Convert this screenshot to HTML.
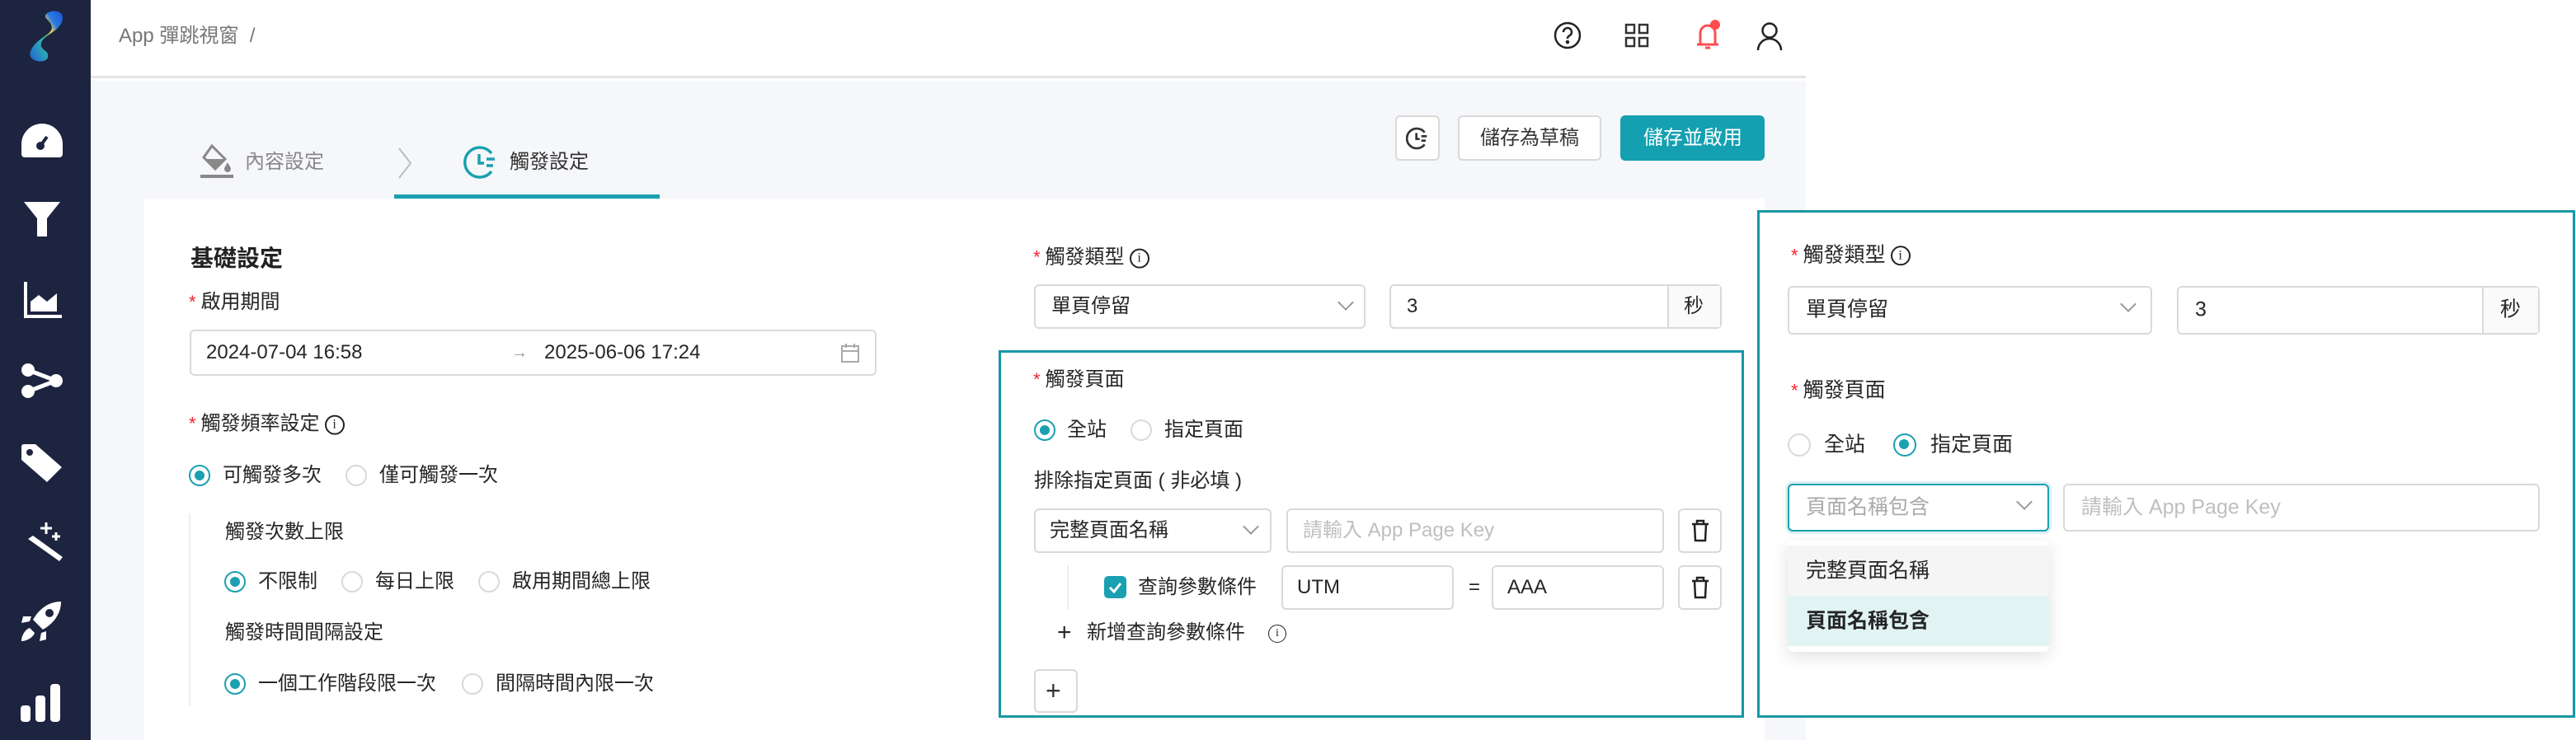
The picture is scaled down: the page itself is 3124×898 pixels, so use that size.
<!DOCTYPE html>
<html><head><meta charset="utf-8">
<style>
*{box-sizing:border-box;margin:0;padding:0}
body{width:3124px;height:898px;overflow:hidden;background:#fff;font-family:"Liberation Sans","Noto Sans CJK TC",sans-serif;color:#262626;font-size:24px;position:relative}
.a{position:absolute}
.t{position:absolute;white-space:nowrap;line-height:1;transform:translateY(-50%)}
.star{color:#f5222d;margin-right:6px;font-size:22px}
.box{position:absolute;border:2px solid #d9d9d9;border-radius:6px;background:#fff}
.r{position:absolute;width:26px;height:26px;border-radius:50%;border:2px solid #d9d9d9;background:#fff;transform:translate(-50%,-50%)}
.r.on{border-color:#1aa0b0}
.r.on::after{content:"";position:absolute;left:5px;top:5px;width:12px;height:12px;border-radius:50%;background:#1aa0b0}
.info{display:inline-block;width:24px;height:24px;border:2px solid #222;border-radius:50%;font-size:16px;text-align:center;line-height:20px;font-family:"Liberation Serif",serif;vertical-align:middle;margin-left:6px}
.chev{position:absolute;width:14px;height:14px;border-right:2px solid #999;border-bottom:2px solid #999;transform:rotate(45deg)}
.ph{color:#bfbfbf}
</style></head><body>
<!-- sidebar -->
<div class="a" style="left:0;top:0;width:110px;height:898px;background:#1d2440"></div>
<svg class="a" style="left:30px;top:12px" width="50" height="64" viewBox="0 0 50 64">
<defs><linearGradient id="g" x1="0" y1="1" x2="1" y2="0"><stop offset="0" stop-color="#1e5fd8"/><stop offset=".45" stop-color="#35c0a8"/><stop offset=".62" stop-color="#f2d444"/><stop offset=".75" stop-color="#2a7be6"/><stop offset="1" stop-color="#1a55d0"/></linearGradient></defs>
<path d="M40 2 C48 4 48 14 40 22 C32 30 18 34 20 44 C22 50 30 50 28 58 C26 63 16 64 10 60 C4 56 6 48 14 40 C24 30 36 28 32 18 C30 12 22 10 26 5 C30 1 36 1 40 2Z" fill="url(#g)"/></svg>
<svg class="a" style="left:25px;top:148px" width="52" height="44" viewBox="0 0 52 44" fill="#fff"><path d="M26 2A25 25 0 0 0 1 27v12a4 4 0 0 0 4 4h42a4 4 0 0 0 4-4V27A25 25 0 0 0 26 2z"/><circle cx="24" cy="29" r="5" fill="#1d2440"/><path d="M24 29L32 18" stroke="#1d2440" stroke-width="4"/></svg>
<svg class="a" style="left:27px;top:243px" width="48" height="46" viewBox="0 0 48 46" fill="#fff"><path d="M2 2h44L30 22v22h-12V22z"/></svg>
<svg class="a" style="left:27px;top:342px" width="48" height="46" viewBox="0 0 48 46" fill="#fff"><path d="M2 0h4v40h42v4H2z"/><path d="M10 36V24l10-8 10 8 12-10v22z"/></svg>
<svg class="a" style="left:24px;top:440px" width="54" height="44" viewBox="0 0 54 44" fill="#fff"><circle cx="10" cy="9" r="8"/><circle cx="44" cy="22" r="8"/><circle cx="10" cy="35" r="8"/><path d="M10 9L44 22L10 35" stroke="#fff" stroke-width="5" fill="none"/></svg>
<svg class="a" style="left:24px;top:538px" width="54" height="50" viewBox="0 0 54 50" fill="#fff"><path d="M2 4a3 3 0 0 1 3-3h14l32 28-18 18L2 20z"/><circle cx="12" cy="11" r="4" fill="#1d2440"/></svg>
<svg class="a" style="left:30px;top:632px" width="48" height="50" viewBox="0 0 48 50" fill="#fff"><path d="M4 22l6-4 36 26-4 5z"/><path d="M26 2v14M19 9h14M38 14v10M33 19h10" stroke="#fff" stroke-width="3"/></svg>
<svg class="a" style="left:24px;top:728px" width="54" height="52" viewBox="0 0 54 52" fill="#fff"><path d="M50 2C36 2 24 10 16 24l12 12C42 28 50 16 50 2z"/><circle cx="36" cy="16" r="5" fill="#1d2440"/><path d="M14 20H4l-2 8 10-2zM32 38v10l-8 2 2-10zM12 34c-6 2-10 10-10 16 6 0 14-4 16-10z"/></svg>
<svg class="a" style="left:25px;top:828px" width="52" height="50" viewBox="0 0 52 50" fill="#fff"><rect x="0" y="28" width="12" height="20" rx="4"/><rect x="18" y="16" width="12" height="32" rx="4"/><rect x="36" y="2" width="12" height="46" rx="4"/></svg>

<!-- header -->
<div class="a" style="left:110px;top:0;width:2080px;height:95px;background:#fff;border-bottom:3px solid #e4e4e4"></div>
<div class="t" style="left:144px;top:44px;color:#777;font-size:24px">App 彈跳視窗 &nbsp;/</div>
<svg class="a" style="left:1884px;top:26px" width="34" height="34" viewBox="0 0 34 34" fill="none" stroke="#222" stroke-width="2.5"><circle cx="17" cy="17" r="15"/><path d="M12 13a5 5 0 1 1 7 4.5c-1.5.8-2 1.5-2 3.5"/><circle cx="17" cy="25" r="1" fill="#222"/></svg>
<svg class="a" style="left:1970px;top:28px" width="30" height="30" viewBox="0 0 30 30" fill="none" stroke="#333" stroke-width="2.5"><rect x="2" y="2" width="10" height="10"/><rect x="18" y="2" width="10" height="10"/><rect x="2" y="18" width="10" height="10"/><rect x="18" y="18" width="10" height="10"/></svg>
<svg class="a" style="left:2054px;top:22px" width="34" height="40" viewBox="0 0 34 40" fill="none" stroke="#ff4d4f" stroke-width="3"><path d="M4 32h26M8 32V18a9 9 0 0 1 18 0v14M14 36h6"/><circle cx="26" cy="8" r="6" fill="#ff4d4f" stroke="none"/></svg>
<svg class="a" style="left:2130px;top:26px" width="32" height="36" viewBox="0 0 32 36" fill="none" stroke="#222" stroke-width="2.5"><circle cx="16" cy="11" r="8.5"/><path d="M2 35a14 14 0 0 1 28 0"/></svg>

<!-- content bg -->
<div class="a" style="left:110px;top:98px;width:2080px;height:800px;background:#f6f7fa"></div>

<!-- tabs -->
<svg class="a" style="left:243px;top:175px" width="40" height="42" viewBox="0 0 40 42" fill="#888"><path d="M14 2l16 16-12 12L4 16z" fill="none" stroke="#888" stroke-width="3"/><path d="M6 18h24L18 30z"/><path d="M33 22c2 4 4 6 4 8a4 4 0 0 1-8 0c0-2 2-4 4-8z"/><rect x="0" y="37" width="40" height="4"/></svg>
<div class="t" style="left:297px;top:197px;color:#888">內容設定</div>
<svg class="a" style="left:481px;top:178px" width="20" height="40" viewBox="0 0 20 40" fill="none" stroke="#bbb" stroke-width="2"><path d="M3 2l14 18L3 38"/></svg>
<svg class="a" style="left:562px;top:176px" width="42" height="42" viewBox="0 0 42 42" fill="none" stroke="#1aa0b0" stroke-width="3.5"><path d="M34 10A18 18 0 1 0 34 32"/><path d="M19 11v11h6M28 17h10M28 25h8"/></svg>
<div class="t" style="left:618px;top:197px;color:#333">觸發設定</div>
<div class="a" style="left:478px;top:236px;width:322px;height:5px;background:#1aa0b0"></div>

<!-- action buttons -->
<div class="box" style="left:1692px;top:140px;width:54px;height:55px"></div>
<svg class="a" style="left:1705px;top:154px" width="28" height="28" viewBox="0 0 42 42" fill="none" stroke="#333" stroke-width="4"><path d="M34 10A18 18 0 1 0 34 32"/><path d="M19 11v11h6M28 17h10M28 25h8"/></svg>
<div class="box" style="left:1768px;top:140px;width:174px;height:55px"></div>
<div class="t" style="left:1795px;top:168px;color:#333">儲存為草稿</div>
<div class="a" style="left:1965px;top:140px;width:175px;height:55px;background:#14a0b0;border-radius:6px"></div>
<div class="t" style="left:1993px;top:168px;color:#fff">儲存並啟用</div>

<!-- card -->
<div class="a" style="left:175px;top:241px;width:1965px;height:657px;background:#fff"></div>

<!-- left col -->
<div class="t" style="left:231px;top:314px;font-size:28px;font-weight:bold;color:#222">基礎設定</div>
<div class="t" style="left:229px;top:367px"><span class="star">*</span>啟用期間</div>
<div class="box" style="left:230px;top:400px;width:833px;height:56px"></div>
<div class="t" style="left:250px;top:428px">2024-07-04 16:58</div>
<div class="t" style="left:620px;top:428px;color:#999;font-size:20px">→</div>
<div class="t" style="left:660px;top:428px">2025-06-06 17:24</div>
<svg class="a" style="left:1020px;top:416px" width="22" height="24" viewBox="0 0 22 24" fill="none" stroke="#aaa" stroke-width="2"><rect x="1" y="4" width="20" height="19"/><path d="M1 10h20M6 1v5M16 1v5"/></svg>

<div class="t" style="left:229px;top:515px"><span class="star">*</span>觸發頻率設定<span class="info">i</span></div>
<div class="r on" style="left:242px;top:577px"></div><div class="t" style="left:270px;top:577px">可觸發多次</div>
<div class="r" style="left:432px;top:577px"></div><div class="t" style="left:460px;top:577px">僅可觸發一次</div>
<div class="a" style="left:229px;top:623px;width:2px;height:234px;background:#eee"></div>
<div class="t" style="left:273px;top:646px">觸發次數上限</div>
<div class="r on" style="left:285px;top:706px"></div><div class="t" style="left:313px;top:706px">不限制</div>
<div class="r" style="left:427px;top:706px"></div><div class="t" style="left:455px;top:706px">每日上限</div>
<div class="r" style="left:593px;top:706px"></div><div class="t" style="left:621px;top:706px">啟用期間總上限</div>
<div class="t" style="left:273px;top:768px">觸發時間間隔設定</div>
<div class="r on" style="left:285px;top:830px"></div><div class="t" style="left:313px;top:830px">一個工作階段限一次</div>
<div class="r" style="left:573px;top:830px"></div><div class="t" style="left:601px;top:830px">間隔時間內限一次</div>

<!-- middle col -->
<div class="t" style="left:1253px;top:313px"><span class="star">*</span>觸發類型<span class="info">i</span></div>
<div class="box" style="left:1254px;top:345px;width:402px;height:54px"></div>
<div class="t" style="left:1275px;top:372px">單頁停留</div>
<div class="chev" style="left:1625px;top:360px"></div>
<div class="box" style="left:1685px;top:345px;width:403px;height:54px"></div>
<div class="a" style="left:2022px;top:347px;width:64px;height:50px;background:#fafafa;border-left:2px solid #d9d9d9"></div>
<div class="t" style="left:1706px;top:372px">3</div>
<div class="t" style="left:2042px;top:372px">秒</div>

<div class="a" style="left:1211px;top:425px;width:904px;height:446px;border:3px solid #1597a5"></div>
<div class="t" style="left:1253px;top:461px"><span class="star">*</span>觸發頁面</div>
<div class="r on" style="left:1267px;top:522px"></div><div class="t" style="left:1294px;top:522px">全站</div>
<div class="r" style="left:1384px;top:522px"></div><div class="t" style="left:1412px;top:522px">指定頁面</div>
<div class="t" style="left:1254px;top:584px">排除指定頁面 ( 非必填 )</div>
<div class="box" style="left:1254px;top:617px;width:288px;height:54px"></div>
<div class="t" style="left:1273px;top:644px">完整頁面名稱</div>
<div class="chev" style="left:1510px;top:632px"></div>
<div class="box" style="left:1560px;top:617px;width:458px;height:54px"></div>
<div class="t ph" style="left:1580px;top:644px">請輸入 App Page Key</div>
<div class="box" style="left:2035px;top:617px;width:53px;height:54px"></div>
<svg class="a" style="left:2051px;top:630px" width="22" height="28" viewBox="0 0 22 28" fill="none" stroke="#222" stroke-width="2.5"><path d="M1 6h20M7 6V2h8v4M4 6l1 20h12l1-20"/></svg>
<div class="a" style="left:1294px;top:686px;width:2px;height:54px;background:#eee"></div>
<div class="a" style="left:1339px;top:699px;width:27px;height:27px;border-radius:5px;background:#1aa0b0"></div>
<svg class="a" style="left:1339px;top:699px" width="27" height="27" viewBox="0 0 27 27" fill="none" stroke="#fff" stroke-width="3"><path d="M7 14l5 5 8-10"/></svg>
<div class="t" style="left:1380px;top:713px">查詢參數條件</div>
<div class="box" style="left:1554px;top:686px;width:209px;height:54px"></div>
<div class="t" style="left:1573px;top:713px">UTM</div>
<div class="t" style="left:1781px;top:713px">=</div>
<div class="box" style="left:1809px;top:686px;width:209px;height:54px"></div>
<div class="t" style="left:1828px;top:713px">AAA</div>
<div class="box" style="left:2035px;top:686px;width:53px;height:54px"></div>
<svg class="a" style="left:2051px;top:699px" width="22" height="28" viewBox="0 0 22 28" fill="none" stroke="#222" stroke-width="2.5"><path d="M1 6h20M7 6V2h8v4M4 6l1 20h12l1-20"/></svg>
<div class="t" style="left:1282px;top:768px;font-size:30px">+</div>
<div class="t" style="left:1318px;top:768px">新增查詢參數條件</div>
<div class="t" style="left:1538px;top:768px"><span class="info" style="margin:0;border-width:1.5px;width:22px;height:22px;line-height:19px;font-size:14px">i</span></div>
<div class="box" style="left:1254px;top:812px;width:53px;height:53px"></div>
<div class="t" style="left:1268px;top:838px;font-size:32px;color:#333">+</div>

<!-- right panel -->
<div class="a" style="left:2131px;top:255px;width:992px;height:616px;border:3px solid #1597a5;background:#fff"></div>
<div class="t" style="left:2172px;top:310px;font-size:25px"><span class="star">*</span>觸發類型<span class="info">i</span></div>
<div class="box" style="left:2168px;top:347px;width:442px;height:59px"></div>
<div class="t" style="left:2190px;top:376px;font-size:25px">單頁停留</div>
<div class="chev" style="left:2574px;top:362px"></div>
<div class="box" style="left:2640px;top:347px;width:440px;height:59px"></div>
<div class="a" style="left:3010px;top:349px;width:68px;height:55px;background:#fafafa;border-left:2px solid #d9d9d9"></div>
<div class="t" style="left:2662px;top:376px;font-size:25px">3</div>
<div class="t" style="left:3032px;top:376px;font-size:25px">秒</div>
<div class="t" style="left:2172px;top:474px;font-size:25px"><span class="star">*</span>觸發頁面</div>
<div class="r" style="left:2182px;top:540px;width:28px;height:28px"></div><div class="t" style="left:2212px;top:540px;font-size:25px">全站</div>
<div class="r on" style="left:2310px;top:540px;width:28px;height:28px"></div><div class="t" style="left:2341px;top:540px;font-size:25px">指定頁面</div>
<div class="box" style="left:2168px;top:587px;width:317px;height:58px;border-color:#1aa0b0;box-shadow:0 0 0 3px rgba(26,160,176,.15)"></div>
<div class="t ph" style="left:2190px;top:616px;font-size:25px;color:#aaa">頁面名稱包含</div>
<div class="chev" style="left:2448px;top:602px"></div>
<div class="box" style="left:2502px;top:587px;width:578px;height:58px"></div>
<div class="t ph" style="left:2524px;top:616px;font-size:25px">請輸入 App Page Key</div>
<div class="a" style="left:2168px;top:656px;width:317px;height:135px;background:#fff;border-radius:6px;box-shadow:0 6px 20px rgba(0,0,0,.12)"></div>
<div class="a" style="left:2168px;top:662px;width:317px;height:61px;background:#f5f5f5"></div>
<div class="a" style="left:2168px;top:723px;width:317px;height:61px;background:#e1f3f3"></div>
<div class="t" style="left:2190px;top:693px;font-size:25px">完整頁面名稱</div>
<div class="t" style="left:2190px;top:754px;font-size:25px;font-weight:bold">頁面名稱包含</div>
</body></html>
